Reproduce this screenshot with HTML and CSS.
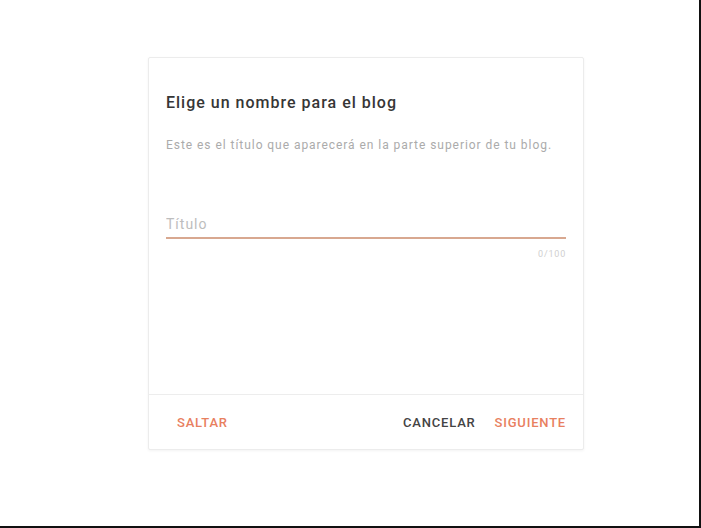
FILE: index.html
```html
<!DOCTYPE html>
<html lang="es">
<head>
<meta charset="utf-8">
<title>Elige un nombre para el blog</title>
<link rel="stylesheet" href="styles.css">
</head>
<body>
<div class="frame">
  <div class="dialog">
    <div class="dialog-body">
      <h2 class="dialog-title">Elige un nombre para el blog</h2>
      <p class="dialog-desc">Este es el título que aparecerá en la parte superior de tu blog.</p>
      <div class="field">
        <input class="field-input" type="text" placeholder="Título">
      </div>
      <div class="counter">0/100</div>
    </div>
    <div class="dialog-footer">
      <button class="btn btn-accent">Saltar</button>
      <div class="footer-right">
        <button class="btn btn-plain">Cancelar</button>
        <button class="btn btn-accent">Siguiente</button>
      </div>
    </div>
  </div>
</div>
</body>
</html>
```

FILE: styles.css
```css
html, body {
  margin: 0;
  padding: 0;
  background: #ffffff;
}
body {
  font-family: Roboto, "Liberation Sans", Arial, sans-serif;
}
.frame {
  box-sizing: border-box;
  width: 701px;
  height: 528px;
  border-right: 2px solid #111;
  border-bottom: 2px solid #111;
  padding: 57px 0 0 148px;
}
.dialog {
  box-sizing: border-box;
  width: 436px;
  height: 393px;
  border: 1px solid #ececec;
  border-radius: 2px;
  box-shadow: 0 1px 3px rgba(0,0,0,0.05);
  display: flex;
  flex-direction: column;
  background: #fff;
}
.dialog-body {
  flex: 1;
  padding: 35px 17px 0 17px;
  display: flex;
  flex-direction: column;
}
.dialog-title {
  margin: 0;
  font-size: 16px;
  line-height: 20px;
  font-weight: 500;
  letter-spacing: 1px;
  color: #363636;
}
.dialog-desc {
  margin: 24px 0 0;
  font-size: 12px;
  line-height: 16px;
  letter-spacing: 0.95px;
  color: #ababab;
}
.field {
  margin-top: 61px;
  border-bottom: 2px solid #d8a890;
  padding-bottom: 3px;
}
.field-input {
  display: block;
  width: 100%;
  box-sizing: border-box;
  border: 0;
  outline: 0;
  padding: 0;
  margin: 0;
  height: 20px;
  font-family: inherit;
  font-size: 14px;
  letter-spacing: 1px;
  color: #333;
  background: transparent;
}
.field-input::placeholder {
  color: #bdbdbd;
}
.counter {
  margin-top: 9px;
  text-align: right;
  font-size: 9px;
  line-height: 12px;
  letter-spacing: 0.8px;
  color: #cfcfcf;
}
.dialog-footer {
  height: 54px;
  border-top: 1px solid #ededed;
  display: flex;
  align-items: center;
  justify-content: space-between;
  padding: 0 17px 0 28px;
}
.footer-right {
  display: flex;
  gap: 19px;
}
.btn {
  border: 0;
  background: none;
  padding: 0;
  margin: 0;
  font-family: inherit;
  font-size: 13px;
  font-weight: 500;
  letter-spacing: 0.8px;
  text-transform: uppercase;
  cursor: pointer;
}
.btn-accent {
  color: #e8805f;
}
.btn-plain {
  color: #444;
}
```
